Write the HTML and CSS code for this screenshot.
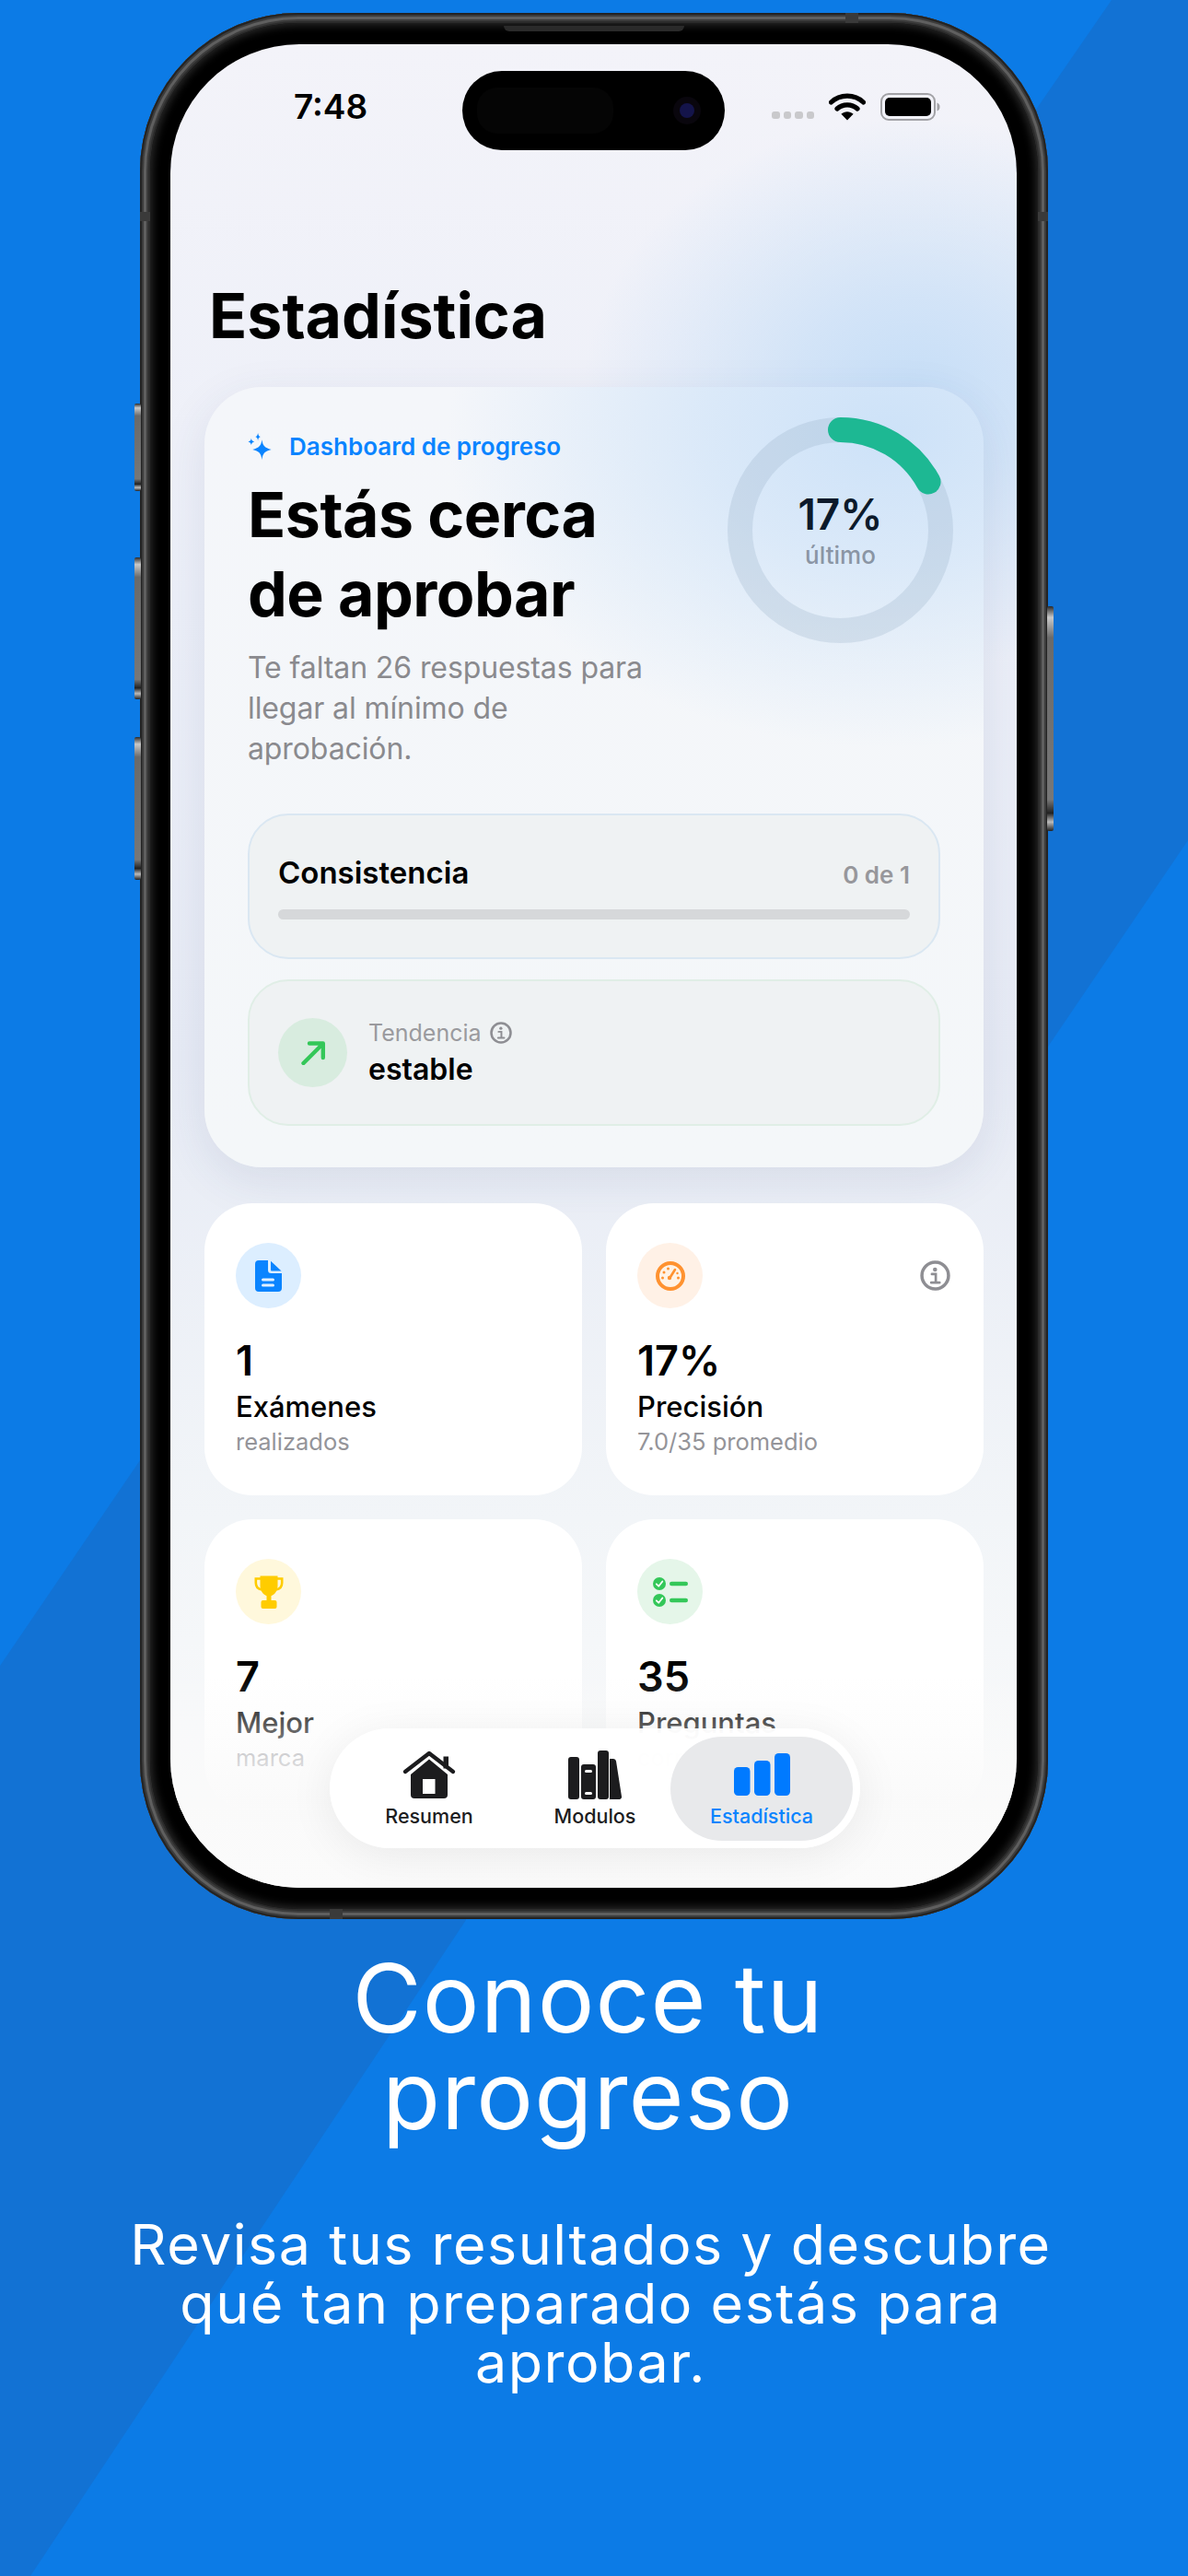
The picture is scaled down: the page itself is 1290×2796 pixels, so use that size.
FILE: index.html
```html
<!DOCTYPE html>
<html lang="es">
<head>
  <meta charset="UTF-8" />
  <title>Conoce tu progreso</title>
  <link rel="stylesheet" href="styles.css">
</head>
<body>
  <div class="band band-right"></div>
  <div class="band band-left"></div>

  <svg class="defs" width="0" height="0">
    <symbol id="info" viewBox="0 0 32 32">
      <circle cx="16" cy="16" r="14" fill="none" stroke="currentColor" stroke-width="3.4"/>
      <circle cx="15.8" cy="9.6" r="2.2" fill="currentColor"/>
      <path d="M12.5 14.5H16.6V23M11.8 23.4H20.6" fill="none" stroke="currentColor" stroke-width="2.6" stroke-linecap="round"/>
    </symbol>
  </svg>

  <main class="page">
    <div class="phone">
      <span class="side-btn btn-a"></span>
      <span class="side-btn btn-b"></span>
      <span class="side-btn btn-c"></span>
      <span class="side-btn btn-d"></span>
      <span class="speaker"></span>
      <span class="antenna ant-top"></span>
      <span class="antenna ant-bottom"></span>
      <span class="antenna ant-left"></span>
      <span class="antenna ant-right"></span>

      <div class="bezel">
        <div class="screen">
          <div class="island">
            <span class="island-sensor"></span>
            <span class="island-lens"></span>
          </div>

          <div class="status">
            <span class="time">7:48</span>
            <div class="status-icons">
              <div class="signal"><i></i><i></i><i></i><i></i></div>
              <svg class="wifi" viewBox="0 0 40 30">
                <path d="M2.5 10C12 .8 28 .8 37.5 10M9 17C15 11.4 25 11.4 31 17" fill="none" stroke="#000" stroke-width="5.2" stroke-linecap="round"/>
                <path d="M20 29.5 13.4 22.8C17 19.4 23 19.4 26.6 22.8Z" fill="#000"/>
              </svg>
              <svg class="battery" viewBox="0 0 65 30">
                <rect x="1" y="1" width="58" height="28" rx="8" fill="none" stroke="#a2a2a6" stroke-width="2"/>
                <rect x="5" y="5" width="50" height="20" rx="5" fill="#000"/>
                <path d="M61.5 10.5C63.8 11.5 64.5 13 64.5 15S63.8 18.5 61.5 19.5Z" fill="#a2a2a6"/>
              </svg>
            </div>
          </div>

          <h1 class="title">Estadística</h1>

          <section class="hero">
            <div class="hero-top">
              <div class="hero-text">
                <div class="eyebrow">
                  <svg class="sparkle" viewBox="0 0 28 30">
                    <path d="M16 7.5C17 14.5 19 16.5 26.5 18.5 19 20.5 17 22.5 16 30 15 22.5 13 20.5 5.5 18.5 13 16.5 15 14.5 16 7.5Z" fill="#0a84ff"/>
                    <path d="M11.5 0C12 3 12.8 3.8 14.5 4.2 12.8 4.7 12 5.5 11.5 8.5 11 5.5 10.2 4.7 8.5 4.2 10.2 3.8 11 3 11.5 0Z" fill="#0a84ff"/>
                    <path d="M4 6C4.5 8.5 5 9 7.5 9.7 5 10.4 4.5 11 4 13.5 3.5 11 3 10.4 .5 9.7 3 9 3.5 8.5 4 6Z" fill="#0a84ff"/>
                  </svg>
                  <span>Dashboard de progreso</span>
                </div>
                <h2 class="hero-title">Estás cerca<br>de aprobar</h2>
                <p class="hero-copy">Te faltan 26 respuestas para<br>llegar al mínimo de<br>aprobación.</p>
              </div>
              <div class="ring">
                <svg class="ring-svg" viewBox="0 0 245 245">
                  <circle cx="122.5" cy="122.5" r="109" fill="none" stroke="#8ea6bf" stroke-opacity=".24" stroke-width="27"/>
                  <circle cx="122.5" cy="122.5" r="109" fill="none" stroke="#1db893" stroke-width="27" stroke-linecap="round" pathLength="100" stroke-dasharray="17 100" transform="rotate(-90 122.5 122.5)"/>
                </svg>
                <div class="ring-label">
                  <strong>17%</strong>
                  <span>último</span>
                </div>
              </div>
            </div>

            <div class="panel panel-blue">
              <div class="panel-head">
                <strong>Consistencia</strong>
                <span>0 de 1</span>
              </div>
              <div class="track"></div>
            </div>

            <div class="panel panel-green">
              <div class="trend-icon">
                <svg viewBox="0 0 26 26" width="26" height="26">
                  <path d="M2.5 24 23.5 3M9 2.5H23.8V18" fill="none" stroke="#34c759" stroke-width="4.4" stroke-linecap="round" stroke-linejoin="round"/>
                </svg>
              </div>
              <div>
                <div class="trend-label">Tendencia <svg class="info-sm"><use href="#info"/></svg></div>
                <div class="trend-value">estable</div>
              </div>
            </div>
          </section>

          <section class="stats">
            <article class="stat">
              <div class="stat-top">
                <div class="stat-icon tint-blue">
                  <svg viewBox="0 0 29 34" width="29" height="34">
                    <path d="M4 0H14V10.5A3.5 3.5 0 0 0 17.5 14H29V30A4 4 0 0 1 25 34H4A4 4 0 0 1 0 30V4A4 4 0 0 1 4 0Z" fill="#0a84ff"/>
                    <path d="M17 .8 28.5 11.5H18A1 1 0 0 1 17 10.5Z" fill="#0a84ff"/>
                    <rect x="7" y="19.5" width="14" height="3" rx="1.5" fill="#e1f0ff"/>
                    <rect x="7" y="25.5" width="14" height="3" rx="1.5" fill="#e1f0ff"/>
                  </svg>
                </div>
              </div>
              <div class="stat-value">1</div>
              <div class="stat-label">Exámenes</div>
              <div class="stat-sub">realizados</div>
            </article>

            <article class="stat">
              <div class="stat-top">
                <div class="stat-icon tint-orange">
                  <svg viewBox="0 0 32 32" width="32" height="32">
                    <circle cx="16" cy="16" r="14" fill="#fff3e6" stroke="#ff9230" stroke-width="4"/>
                    <path d="M15 18.5 21 9" stroke="#ff9230" stroke-width="2.6" stroke-linecap="round"/>
                    <circle cx="15" cy="18" r="2.2" fill="#ff9230"/>
                    <g fill="#ff9230">
                      <circle cx="7.5" cy="18" r="1.5"/><circle cx="9" cy="12" r="1.5"/><circle cx="13.5" cy="8" r="1.5"/>
                      <circle cx="24.5" cy="18" r="1.5"/><circle cx="23.5" cy="13" r="1.2"/>
                    </g>
                  </svg>
                </div>
                <svg class="info-lg"><use href="#info"/></svg>
              </div>
              <div class="stat-value">17%</div>
              <div class="stat-label">Precisión</div>
              <div class="stat-sub">7.0/35 promedio</div>
            </article>

            <article class="stat">
              <div class="stat-top">
                <div class="stat-icon tint-yellow">
                  <svg viewBox="0 0 32 36" width="32" height="36">
                    <path d="M6.5 .5H25.5V11C25.5 18 20.5 22.5 16 22.5S6.5 18 6.5 11Z" fill="#ffcc00"/>
                    <path d="M7 3.5H1.8V8C1.8 12.5 4.5 15 8.5 15.5M25 3.5H30.2V8C30.2 12.5 27.5 15 23.5 15.5" fill="none" stroke="#ffcc00" stroke-width="2.6"/>
                    <rect x="13.5" y="21" width="5" height="8" fill="#ffcc00"/>
                    <rect x="7.5" y="27" width="17" height="9" rx="2" fill="#ffcc00"/>
                  </svg>
                </div>
              </div>
              <div class="stat-value">7</div>
              <div class="stat-label">Mejor</div>
              <div class="stat-sub">marca</div>
            </article>

            <article class="stat">
              <div class="stat-top">
                <div class="stat-icon tint-green">
                  <svg viewBox="0 0 38 32" width="38" height="32">
                    <circle cx="7" cy="7" r="7" fill="#34c759"/>
                    <path d="M3.8 7.3 6.2 9.7 10.3 4.5" fill="none" stroke="#fff" stroke-width="1.8" stroke-linecap="round" stroke-linejoin="round"/>
                    <rect x="18" y="4.8" width="20" height="4.4" rx="2.2" fill="#34c759"/>
                    <circle cx="7" cy="25" r="7" fill="#34c759"/>
                    <path d="M3.8 25.3 6.2 27.7 10.3 22.5" fill="none" stroke="#fff" stroke-width="1.8" stroke-linecap="round" stroke-linejoin="round"/>
                    <rect x="18" y="22.8" width="20" height="4.4" rx="2.2" fill="#34c759"/>
                  </svg>
                </div>
              </div>
              <div class="stat-value">35</div>
              <div class="stat-label">Preguntas</div>
              <div class="stat-sub">correctas</div>
            </article>
          </section>

          <div class="fade"></div>

          <nav class="tabbar">
            <a class="tab">
              <svg class="tab-icon" viewBox="0 0 60 54" width="60" height="54">
                <path d="M4 23 30 3 56 23" fill="none" stroke="#1c1c1e" stroke-width="4.4" stroke-linecap="round" stroke-linejoin="round"/>
                <rect x="45.5" y="6.5" width="5.5" height="13" fill="#1c1c1e"/>
                <path d="M10 26 30 9.5 50 26V48A4 4 0 0 1 46 52H14A4 4 0 0 1 10 48Z" fill="#1c1c1e"/>
                <rect x="23" y="31" width="13.5" height="16" fill="#fff"/>
              </svg>
              <span>Resumen</span>
            </a>
            <a class="tab">
              <svg class="tab-icon" viewBox="0 0 60 54" width="60" height="54">
                <g fill="#1c1c1e">
                  <rect x="1" y="7" width="12" height="46" rx="3"/>
                  <rect x="15" y="15" width="16" height="38" rx="3"/>
                  <rect x="33" y="0" width="12" height="53" rx="3"/>
                  <path d="M46 9H50A3 3 0 0 1 53 11.5L59 50A2.5 2.5 0 0 1 56.5 53H46Z"/>
                </g>
                <rect x="19" y="21" width="8" height="3" rx="1.5" fill="#fff"/>
                <rect x="19" y="45" width="8" height="3" rx="1.5" fill="#fff"/>
              </svg>
              <span>Modulos</span>
            </a>
            <a class="tab tab-active">
              <svg class="tab-icon" viewBox="0 0 61 54" width="61" height="54">
                <g fill="#007aff">
                  <rect x="0" y="18" width="17.5" height="31" rx="4.5"/>
                  <rect x="22" y="11" width="17.5" height="38" rx="4.5"/>
                  <rect x="44" y="3" width="17" height="46" rx="4.5"/>
                </g>
              </svg>
              <span>Estadística</span>
            </a>
          </nav>
        </div>
      </div>
    </div>

    <section class="caption">
      <h2 class="caption-title">Conoce tu<br>progreso</h2>
      <p class="caption-copy">Revisa tus resultados y descubre<br>qué tan preparado estás para<br>aprobar.</p>
    </section>
  </main>
</body>
</html>
```

FILE: styles.css
```css
* {
  box-sizing: border-box;
  margin: 0;
}
body {
  position: relative;
  width: 1290px;
  height: 2796px;
  overflow: hidden;
  background: #0c7be6;
  font-family: Inter, "Liberation Sans", sans-serif;
  color: #000;
}
.defs {
  position: absolute;
}

/* darker diagonal bands behind the phone */
.band {
  position: absolute;
  inset: 0;
  background: #1272d4;
}
.band-right {
  clip-path: polygon(1207px 0, 1290px 0, 1290px 912px, 1138px 1136px, 1000px 1136px, 1000px 300px);
}
.band-left {
  clip-path: polygon(0 1808px, 152px 1585px, 400px 1585px, 506px 2084px, 33px 2796px, 0 2796px);
}

.page {
  position: relative;
  display: flex;
  flex-direction: column;
  align-items: center;
  padding-top: 14px;
}

/* phone frame */
.phone {
  position: relative;
  width: 986px;
  height: 2069px;
  padding: 11px;
  border-radius: 172px;
  background: #2b2b2b;
  box-shadow: inset 0 0 0 2px #232323, inset 0 0 0 4px #3c3c3c, inset 0 0 0 7px #5f5f5f, inset 0 0 0 9px #3c3c3c;
}
.bezel {
  height: 100%;
  padding: 23px 23px 23px 22px;
  border-radius: 161px;
  background: #000;
  box-shadow: inset 0 0 10px 2px #2c2c2c;
}
.side-btn {
  position: absolute;
  width: 7px;
  border-radius: 2px;
  background: linear-gradient(#2a2a2a, #c9c9c9 5%, #6a6a6a 14%, #777 86%, #222 92%, #bbb 96%, #222);
}
.btn-a { left: -6px; top: 424px; height: 95px; }
.btn-b { left: -6px; top: 591px; height: 154px; }
.btn-c { left: -6px; top: 786px; height: 155px; }
.btn-d { right: -6px; top: 644px; height: 244px; }
.speaker {
  position: absolute;
  z-index: 1;
  left: 395px;
  top: 14px;
  width: 196px;
  height: 6px;
  border-radius: 0 0 6px 6px;
  background: #2a2a2a;
}
.antenna {
  position: absolute;
  background: #3a3a3a;
}
.ant-top { left: 766px; top: 0; width: 14px; height: 11px; }
.ant-bottom { left: 206px; bottom: 0; width: 14px; height: 11px; }
.ant-left { left: 0; top: 216px; width: 11px; height: 10px; }
.ant-right { right: 0; top: 216px; width: 11px; height: 10px; }

.screen {
  position: relative;
  height: 100%;
  padding: 0 36px 0 37px;
  overflow: hidden;
  border-radius: 140px;
  background:
    radial-gradient(ellipse 360px 300px at 88% 19%, #c6def7 0, rgba(198, 222, 247, .7) 35%, rgba(198, 222, 247, 0) 100%),
    linear-gradient(#f3f3f9 0, #eceff8 30%, #e7ebf5 55%, #f2f5f8 80%, #fbfbfb 100%);
}
.island {
  position: absolute;
  left: 317px;
  top: 29px;
  display: flex;
  align-items: center;
  justify-content: space-between;
  width: 285px;
  height: 86px;
  padding: 0 33px 0 16px;
  border-radius: 43px;
  background: #000;
}
.island-sensor {
  width: 148px;
  height: 50px;
  border-radius: 22px;
  background: #050505;
}
.island-lens {
  width: 16px;
  height: 16px;
  border-radius: 50%;
  background: #14144a;
  box-shadow: 0 0 0 7px #09060d;
}

.status {
  display: flex;
  align-items: center;
  justify-content: space-between;
  height: 36px;
  margin-top: 50px;
  padding: 0 47px 0 97px;
}
.time {
  font-size: 37px;
  line-height: 36px;
  font-weight: 600;
}
.status-icons {
  display: flex;
  align-items: flex-end;
}
.signal {
  display: flex;
  gap: 4px;
  margin-right: 16px;
  margin-bottom: 2px;
}
.signal i {
  width: 8.5px;
  height: 8px;
  border-radius: 3px;
  background: #c9c9cc;
}
.wifi {
  width: 40px;
  height: 30px;
  margin-right: 16px;
}
.battery {
  width: 65px;
  height: 30px;
}

.title {
  margin: 168px 0 38px;
  padding-left: 5px;
  font-size: 68px;
  line-height: 80px;
  font-weight: 700;
}

/* main card */
.hero {
  padding: 0 47px 45px;
  border-radius: 62px;
  background:
    radial-gradient(ellipse 480px 340px at 88% 6%, #cde2f8 0, rgba(205, 226, 248, .65) 42%, rgba(205, 226, 248, 0) 100%),
    linear-gradient(#f4f6fa, #f4f7f9);
  box-shadow: 0 14px 50px rgba(50, 70, 120, .1);
}
.hero-top {
  display: flex;
  justify-content: space-between;
  padding-top: 33px;
}
.hero-text {
  padding-top: 16px;
}
.eyebrow {
  display: flex;
  align-items: center;
  gap: 18px;
  height: 30px;
  font-size: 26px;
  font-weight: 600;
  color: #0a84ff;
}
.sparkle {
  width: 27px;
  height: 29px;
}
.hero-title {
  margin-top: 16px;
  font-size: 68px;
  line-height: 86px;
  font-weight: 700;
  letter-spacing: -.5px;
}
.hero-copy {
  margin-top: 16px;
  font-size: 32px;
  line-height: 44px;
  letter-spacing: -.1px;
  color: #8a8a8e;
}
.ring {
  display: grid;
  align-items: center;
  justify-items: center;
  width: 245px;
  height: 245px;
  margin-right: -14px;
}
.ring-svg,
.ring-label {
  grid-area: 1 / 1;
}
.ring-svg {
  width: 245px;
  height: 245px;
}
.ring-label {
  display: flex;
  flex-direction: column;
  align-items: center;
  gap: 5px;
}
.ring-label strong {
  font-size: 46px;
  line-height: 50px;
  font-weight: 600;
  color: #0c1a2b;
}
.ring-label span {
  font-size: 26px;
  line-height: 30px;
  font-weight: 500;
  color: #8a95a4;
}

.panel {
  border-radius: 44px;
  background: #eff2f3;
}
.panel-blue {
  height: 158px;
  margin-top: 48px;
  padding: 42px 31px 0;
  border: 2px solid #dae7f2;
}
.panel-green {
  display: flex;
  align-items: center;
  gap: 23px;
  height: 159px;
  margin-top: 22px;
  padding: 0 31px;
  border: 2px solid #e0eee6;
}
.panel-head {
  display: flex;
  align-items: baseline;
  justify-content: space-between;
}
.panel-head strong {
  font-size: 33px;
  line-height: 40px;
  font-weight: 600;
}
.panel-head span {
  font-size: 26px;
  font-weight: 600;
  color: #97979b;
}
.track {
  height: 11px;
  margin-top: 20px;
  border-radius: 6px;
  background: #d6d8da;
}
.trend-icon {
  display: flex;
  align-items: center;
  justify-content: center;
  width: 75px;
  height: 75px;
  border-radius: 50%;
  background: #d8ecdf;
}
.trend-label {
  display: flex;
  align-items: center;
  gap: 9px;
  font-size: 25px;
  line-height: 32px;
  color: #9a9a9e;
}
.info-sm {
  width: 24px;
  height: 24px;
  color: #8e8e93;
}
.trend-value {
  margin-top: 4px;
  font-size: 32px;
  line-height: 40px;
  font-weight: 600;
}

/* stat cards */
.stats {
  display: grid;
  grid-template-columns: 410px 410px;
  gap: 26px;
  margin-top: 39px;
}
.stat {
  height: 317px;
  padding: 43px 36px 0 34px;
  border-radius: 52px;
  background: #fff;
}
.stat-top {
  display: flex;
  align-items: center;
  justify-content: space-between;
}
.stat-icon {
  display: flex;
  align-items: center;
  justify-content: center;
  width: 71px;
  height: 71px;
  border-radius: 50%;
}
.tint-blue { background: #dceeff; }
.tint-orange { background: #fff1e6; }
.tint-yellow { background: #fff8dc; }
.tint-green { background: #e5f6e9; }
.info-lg {
  width: 33px;
  height: 33px;
  color: #8e8e93;
}
.stat-value {
  margin-top: 30px;
  font-size: 45px;
  line-height: 54px;
  font-weight: 600;
}
.stat-label {
  margin-top: 4px;
  font-size: 31px;
  line-height: 38px;
  font-weight: 500;
}
.stat-sub {
  margin-top: 4px;
  font-size: 25.5px;
  line-height: 30px;
  color: #949499;
}

/* bottom fade + floating tab bar */
.fade {
  position: absolute;
  left: 0;
  right: 0;
  bottom: 0;
  height: 230px;
  background: linear-gradient(rgba(250, 250, 250, 0) 0, rgba(250, 250, 250, .55) 35%, rgba(250, 250, 250, .95) 58%, #fbfbfb 100%);
}
.tabbar {
  position: absolute;
  left: 173px;
  bottom: 43px;
  display: flex;
  align-items: center;
  width: 576px;
  height: 130px;
  padding-left: 18px;
  border-radius: 65px;
  background: rgba(255, 255, 255, .97);
  box-shadow: 0 8px 50px rgba(0, 0, 0, .07);
}
.tab {
  display: flex;
  flex-direction: column;
  align-items: center;
  width: 180px;
  height: 113px;
  padding-top: 15px;
  border-radius: 57px;
  font-size: 21.5px;
  line-height: 28px;
  font-weight: 500;
  color: #1c1c1e;
}
.tab-icon {
  margin-bottom: 3px;
}
.tab-active {
  width: 198px;
  margin-left: -8px;
  background: #e8e9eb;
  color: #0a84ff;
}

/* copy under the phone */
.caption {
  margin-top: 33px;
  text-align: center;
  color: #fff;
}
.caption-title {
  padding-right: 13px;
  font-size: 103px;
  line-height: 105px;
  font-weight: 400;
  letter-spacing: 1.1px;
}
.caption-copy {
  margin-top: 78px;
  padding-right: 7px;
  font-size: 61px;
  line-height: 64px;
  letter-spacing: 1.5px;
}
```
